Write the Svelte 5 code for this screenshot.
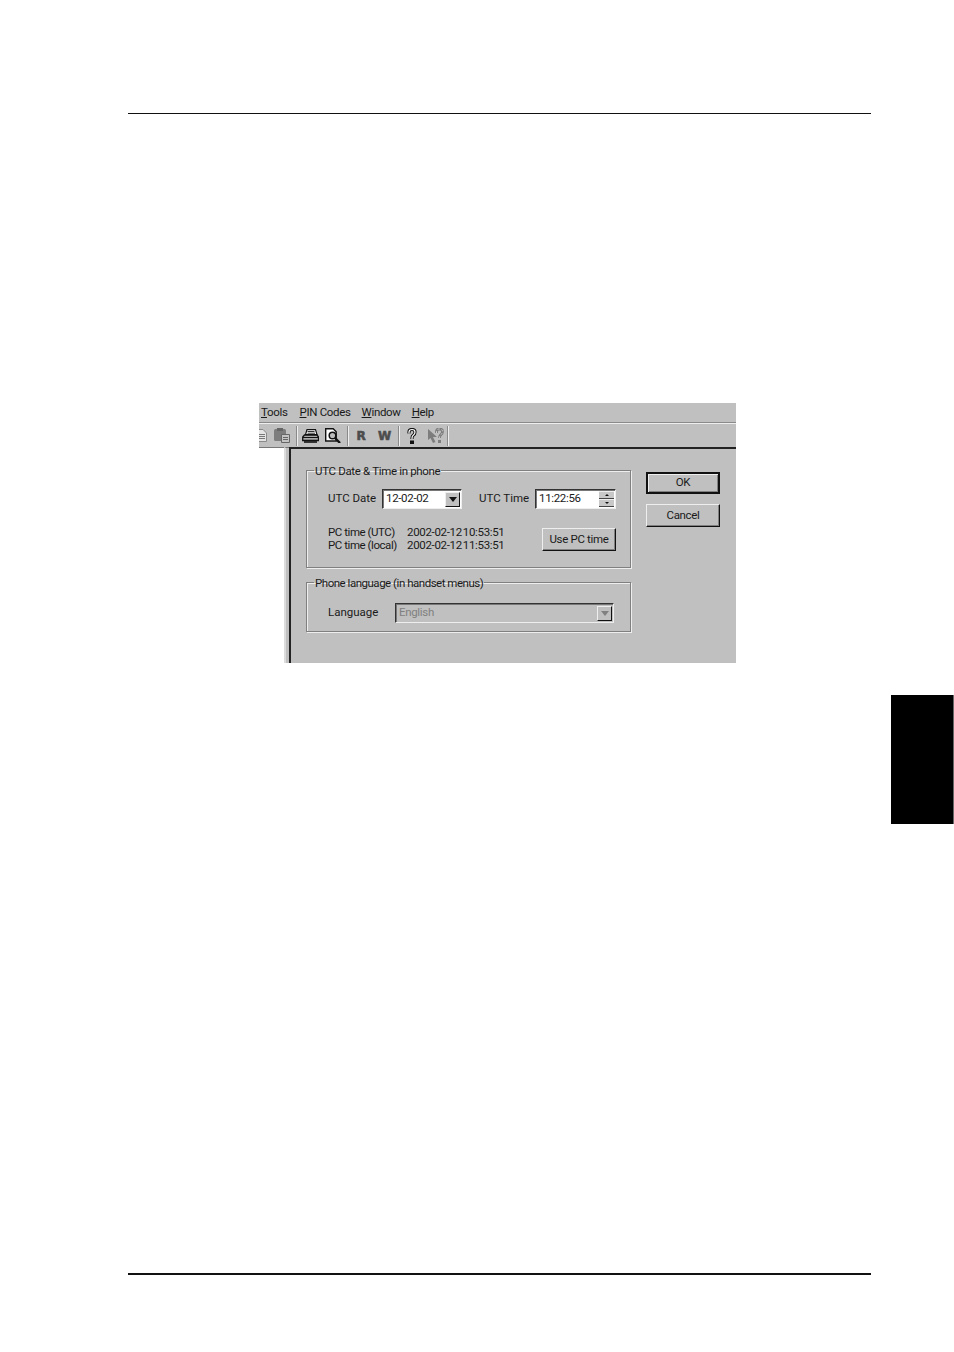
<script lang="ts">
  const menus = [
    { key: "T", rest: "ools" },
    { key: "P", rest: "IN Codes" },
    { key: "W", rest: "indow" },
    { key: "H", rest: "elp" },
  ];
</script>

<div class="page">
  <div class="rule top"></div>

  <div class="shot">
    <div class="menubar">
      {#each menus as menu}
        <span><u>{menu.key}</u>{menu.rest}</span>
      {/each}
    </div>

    <div class="toolbar">
      <svg class="ico doc" width="8" height="15" viewBox="0 0 8 15">
        <path d="M0 1.500h4l3.500 3.500v8.500H0" fill="#e4e4e4" stroke="#8a8a8a" />
        <path d="M0 6.500h6M0 8.500h6M0 10.500h6" stroke="#777" />
      </svg>
      <svg class="ico paste" width="16" height="15" viewBox="0 0 16 15">
        <path d="M0 2.500Q0 1 1.500 1h9Q12 1 12 2.500V13H1.500Q0 13 0 11.500z" fill="#7d7d7d" />
        <path d="M3 0h6v3H3z" fill="#666" />
        <path d="M7.500 6.500h8v8h-8z" fill="#c4c4c4" stroke="#666" />
        <path d="M9 9.500h5M9 11.500h5" stroke="#666" />
      </svg>
      <i class="sep"></i>
      <svg class="ico print" width="17" height="14" viewBox="0 0 17 14">
        <path d="M5 .7h8.500l1.500 5H3.500z" fill="#fff" stroke="#111" stroke-width="1.200" />
        <path d="M5.500 2.500h7M5.500 4.200h7.500" stroke="#333" />
        <path d="M2.500 6h12.500l1.500 2v3.500H.7V8z" fill="#aaa" stroke="#111" stroke-width="1.300" />
        <path d="M1 8.500h15" stroke="#111" />
        <path d="M2 13h13" stroke="#111" stroke-width="1.600" />
      </svg>
      <svg class="ico preview" width="16" height="15" viewBox="0 0 16 15">
        <path d="M.7.7h7.500l3 3V13H.7z" fill="#fff" stroke="#111" stroke-width="1.400" />
        <circle cx="7.500" cy="7.500" r="3.300" fill="#bbb" stroke="#111" stroke-width="1.500" />
        <path d="M10 10l5 5" stroke="#111" stroke-width="2.400" />
      </svg>
      <i class="sep"></i>
      <b class="letter r">R</b>
      <b class="letter w">W</b>
      <i class="sep"></i>
      <svg class="ico help" width="10" height="16" viewBox="0 0 10 16">
        <path d="M2 5.500V4q0-2.500 3-2.500T8 4q0 2-1.500 3T5 10v1" fill="none" stroke="#111" stroke-width="3.200" />
        <path d="M2 5.500V4q0-2.500 3-2.500T8 4q0 2-1.500 3T5 10v1" fill="none" stroke="#fff" stroke-width="1.200" />
        <path d="M3 12.500h4V16H3z" fill="#111" />
      </svg>
      <svg class="ico whats" width="16" height="16" viewBox="0 0 16 16">
        <path d="M0 1v11l2.500-2 2.500 5 2.500-1-2.500-5h4z" fill="#7d7d7d" />
        <path d="M8.500 5V3.500q0-2.500 3-2.500t3 2.500q0 2-1.500 3T11.500 10" fill="none" stroke="#7d7d7d" stroke-width="2.800" />
        <path d="M8.500 5V3.500q0-2.500 3-2.500t3 2.500q0 2-1.500 3T11.500 10" fill="none" stroke="#e4e4e4" stroke-width=".8" stroke-dasharray="2 2" />
        <path d="M10 12h3v3h-3z" fill="#7d7d7d" />
      </svg>
      <i class="sep last"></i>
    </div>

    <div class="workspace">
      <div class="pane"></div>
      <div class="strip"></div>
      <div class="dialog">
        <div class="groups">
          <fieldset class="group date">
            <legend>UTC Date &amp; Time in phone</legend>
            <div class="row">
              <span class="label">UTC Date</span>
              <div class="field combo">
                <span>12-02-02</span>
                <span class="drop"><i class="arrow"></i></span>
              </div>
              <span class="label time">UTC Time</span>
              <div class="field spin">
                <span>11:22:56</span>
                <span class="spinner">
                  <span class="step"><i class="up"></i></span>
                  <span class="step"><i class="down"></i></span>
                </span>
              </div>
            </div>
            <div class="row pc">
              <dl>
                <dt>PC time (UTC)</dt>
                <dd>2002-02-12 10:53:51</dd>
                <dt>PC time (local)</dt>
                <dd>2002-02-12 11:53:51</dd>
              </dl>
              <div class="btn use">Use PC time</div>
            </div>
          </fieldset>

          <fieldset class="group lang">
            <legend>Phone language (in handset menus)</legend>
            <div class="row">
              <span class="label wide">Language</span>
              <div class="field combo off">
                <span>English</span>
                <span class="drop"><i class="arrow"></i></span>
              </div>
            </div>
          </fieldset>
        </div>

        <div class="actions">
          <div class="btn ok">OK</div>
          <div class="btn">Cancel</div>
        </div>
      </div>
    </div>
  </div>

  <div class="tab"></div>
  <div class="rule bottom"></div>
</div>

<style>
  :global(body) {
    margin: 0;
    background: #fff;
  }

  .page {
    display: flex;
    flex-direction: column;
    width: 954px;
    height: 1352px;
    overflow: hidden;
    font-family: Roboto, "Liberation Sans", sans-serif;
    font-size: 11.5px;
    letter-spacing: -0.33px;
    color: #1a1a1a;
  }

  .rule {
    width: 743px;
    margin-left: 128px;
    background: #111;
  }

  .rule.top {
    height: 1px;
    margin-top: 113px;
  }

  .rule.bottom {
    height: 2px;
    margin-top: 449px;
  }

  .shot {
    width: 477px;
    height: 260px;
    margin: 289px 0 0 259px;
    display: flex;
    flex-direction: column;
    background: #c0c0c0;
  }

  .menubar {
    display: flex;
    gap: 11px;
    flex: none;
    height: 20px;
    padding: 0 0 1px 2px;
    box-sizing: border-box;
    align-items: center;
    border-bottom: 1px solid #8a8a8a;
    box-shadow: 0 1px 0 #eee;
  }

  .menubar span:first-child {
    margin-right: 1px;
  }

  .toolbar {
    display: flex;
    align-items: center;
    height: 23px;
    margin-top: 1px;
    flex: none;
  }

  .ico {
    flex: none;
  }

  .paste {
    margin-left: 7px;
  }

  .sep {
    width: 1px;
    height: 20px;
    margin-left: 6px;
    background: #8a8a8a;
    box-shadow: 1px 0 0 #eee;
  }

  .print {
    margin-left: 5px;
  }

  .preview {
    margin-left: 6px;
  }

  .letter {
    font-family: "DejaVu Sans", sans-serif;
    font-weight: 700;
    font-size: 12px;
    letter-spacing: 0;
    color: #4d4d4d;
    -webkit-text-stroke: 0.6px #4d4d4d;
    text-align: center;
  }

  .letter.r {
    width: 10px;
    margin-left: 8px;
  }

  .letter.w {
    width: 12px;
    margin-left: 12px;
  }

  .letter.w + .sep {
    margin-left: 8px;
  }

  .help {
    margin-left: 8px;
  }

  .whats {
    margin-left: 11px;
  }

  .sep.last {
    margin-left: 3px;
  }

  .workspace {
    flex: 1;
    display: flex;
    min-height: 0;
  }

  .pane {
    width: 25px;
    background: #fff;
    border-top: 1px solid #777;
  }

  .strip {
    width: 5px;
    border-left: 2px solid #dcdcdc;
    box-sizing: border-box;
    background: #c0c0c0;
    border-top: 1px solid #777;
  }

  .dialog {
    flex: 1;
    display: flex;
    gap: 15px;
    padding: 14px 16px 0 15px;
    border-left: 2px solid #222;
    border-top: 2px solid #222;
    box-sizing: border-box;
  }

  .groups {
    display: flex;
    flex-direction: column;
    gap: 7px;
    width: 325px;
  }

  .group {
    margin: 0;
    padding: 0 14px 0 21px;
    border: 1px solid #808080;
    box-shadow: inset 1px 1px 0 #eee, 1px 1px 0 #eee;
    box-sizing: border-box;
    min-width: 0;
  }

  .group.date {
    height: 105px;
  }

  .group.lang {
    height: 57px;
  }

  legend {
    margin-left: -14px;
    padding: 1px 1px 0;
    line-height: 14px;
    white-space: nowrap;
  }

  .lang legend {
    letter-spacing: -0.48px;
  }

  .row {
    display: flex;
    align-items: center;
  }

  .date .row:first-of-type {
    margin-top: 11px;
  }

  .lang .row {
    margin-top: 13px;
  }

  .label {
    width: 54px;
    flex: none;
    white-space: nowrap;
    letter-spacing: 0;
    padding-bottom: 2px;
  }

  .label.time {
    width: 56px;
    margin-left: 17px;
  }

  .label.wide {
    width: 67px;
  }

  .field {
    display: flex;
    align-items: center;
    justify-content: space-between;
    height: 20px;
    box-sizing: border-box;
    padding: 0 1px 0 3px;
    background: #fff;
    border: 1px solid;
    border-color: #333 #eee #eee #333;
    box-shadow: inset 1px 1px 0 #777;
  }

  .field > span:first-child {
    margin-bottom: 2px;
  }

  .combo {
    width: 80px;
  }

  .spin {
    width: 81px;
  }

  .combo.off {
    width: 219px;
    background: #c0c0c0;
    color: #808080;
  }

  .drop {
    display: flex;
    align-items: center;
    justify-content: center;
    width: 15px;
    height: 15px;
    background: #c0c0c0;
    border: 1px solid;
    border-color: #eee #111 #111 #eee;
    box-sizing: border-box;
  }

  .arrow {
    border: 4px solid transparent;
    border-top: 5px solid #111;
    border-bottom: 0;
  }

  .off .arrow {
    border-top-color: #808080;
  }

  .spinner {
    display: flex;
    flex-direction: column;
    width: 15px;
  }

  .step {
    display: flex;
    align-items: center;
    justify-content: center;
    height: 8px;
    background: #c8c8c8;
    border-top: 1px solid #eee;
    border-bottom: 1px solid #444;
    box-sizing: border-box;
  }

  .up {
    border: 2px solid transparent;
    border-bottom: 2px solid #111;
    border-top: 0;
  }

  .down {
    border: 2px solid transparent;
    border-top: 2px solid #111;
    border-bottom: 0;
  }

  .row.pc {
    align-items: flex-start;
    justify-content: space-between;
    margin-top: 20px;
  }

  dl {
    display: grid;
    grid-template-columns: 79px auto;
    margin: -3px 0 0;
    line-height: 13px;
  }

  dt,
  dd {
    margin: 0;
    white-space: nowrap;
  }

  dt {
    letter-spacing: -0.45px;
  }

  dd {
    word-spacing: -1.5px;
  }

  .btn {
    display: flex;
    align-items: center;
    justify-content: center;
    height: 23px;
    padding-bottom: 2px;
    box-sizing: border-box;
    border: 1px solid;
    border-color: #eee #111 #111 #eee;
    box-shadow: inset -1px -1px 0 #808080;
  }

  .btn.use {
    width: 74px;
    margin-top: -1px;
  }

  .actions {
    display: flex;
    flex-direction: column;
    gap: 10px;
    width: 74px;
    padding-top: 9px;
  }

  .btn.ok {
    height: 22px;
    border: 2px solid #111;
    box-shadow: inset 1px 1px 0 #eee, inset -1px -1px 0 #808080;
  }

  .tab {
    width: 63px;
    height: 129px;
    margin: 32px 0 0 auto;
    box-sizing: border-box;
    background: #000;
    border-right: 1px solid #666;
  }
</style>
